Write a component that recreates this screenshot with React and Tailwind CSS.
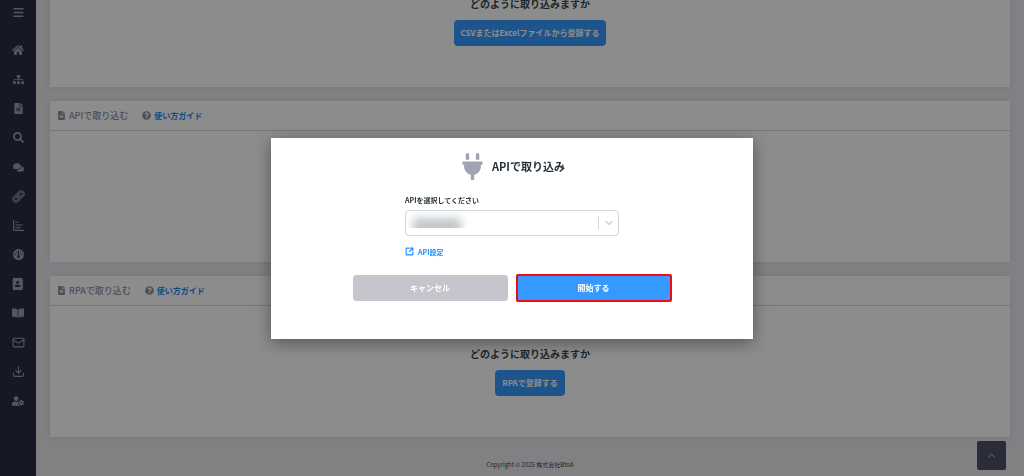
import {
  FaHome,
  FaSitemap,
  FaFileAlt,
  FaSearch,
  FaComments,
  FaAddressBook,
  FaBookOpen,
  FaUserCog,
  FaQuestionCircle,
  FaPlug,
} from "react-icons/fa";
import { FaGauge } from "react-icons/fa6";
import {
  Menu,
  ChartBar,
  Mail,
  Download,
  ChevronUp,
  ChevronDown,
  SquareArrowOutUpRight,
} from "lucide-react";

// chain link drawn as an outline: a wide stroke with a thinner dark one on top
function LinkOutline({ size }) {
  const chain = (
    <>
      <path d="M10 13a5 5 0 0 0 7.54.54l3-3a5 5 0 0 0-7.07-7.07l-1.72 1.71" />
      <path d="M14 11a5 5 0 0 0-7.54-.54l-3 3a5 5 0 0 0 7.07 7.07l1.71-1.71" />
    </>
  );
  return (
    <svg width={size} height={size} viewBox="-1 -1 26 26" fill="none" strokeLinecap="round">
      <g stroke="currentColor" strokeWidth="4.5">
        {chain}
      </g>
      <g stroke="#282d45" strokeWidth="1.5">
        {chain}
      </g>
    </svg>
  );
}

const navItems = [
  { id: "home", icon: FaHome, size: 12 },
  { id: "org", icon: FaSitemap, size: 11 },
  { id: "file", icon: FaFileAlt, size: 11 },
  { id: "search", icon: FaSearch, size: 11 },
  { id: "chat", icon: FaComments, size: 11 },
  { id: "link", icon: LinkOutline, size: 13 },
  { id: "chart", icon: ChartBar, size: 13 },
  { id: "dashboard", icon: FaGauge, size: 11 },
  { id: "contacts", icon: FaAddressBook, size: 12 },
  { id: "book", icon: FaBookOpen, size: 12 },
  { id: "mail", icon: Mail, size: 13 },
  { id: "download", icon: Download, size: 13 },
  { id: "users", icon: FaUserCog, size: 12 },
];

function Sidebar() {
  return (
    <aside className="flex w-9 shrink-0 flex-col items-center bg-[#282d45] pt-1.5 text-[#9a9eb4]">
      <button aria-label="menu" className="-ml-1">
        <Menu size={13} strokeWidth={3} className="ml-1" />
      </button>
      <nav className="mt-6 flex h-[365px] flex-col items-center justify-between">
        {navItems.map(({ id, icon: Icon, size }) => (
          <a key={id} href={`#${id}`} aria-label={id} className="flex h-3.5 items-center">
            <Icon size={size} />
          </a>
        ))}
      </nav>
    </aside>
  );
}

function Card({ title, children }) {
  return (
    <section className="shrink-0 bg-white shadow-[0_0_8px_rgba(82,63,105,0.12)]">
      {title && (
        <header className="flex h-[30px] items-center border-b border-gray-300 px-[7px] text-[9px] font-medium text-[#8c8ea3]">
          <FaFileAlt size={9} />
          <h2 className="ml-[3px] font-medium">{title}</h2>
          <FaQuestionCircle size={9} className="ml-3.5" />
          <a href="#guide" className="ml-[3px] text-[8px] font-bold text-[#1a84f5]">
            使い方ガイド
          </a>
        </header>
      )}
      <div className="flex min-h-[131px] flex-col items-center pt-[42px]">{children}</div>
    </section>
  );
}

function Question({ action }) {
  return (
    <>
      <p className="text-[10px] leading-3 font-bold text-[#37474f]">どのように取り込みますか</p>
      <button className="mt-2.5 h-[26px] rounded-sm bg-[#3699ff] px-[7px] text-[8px] font-bold text-white">
        {action}
      </button>
    </>
  );
}

function ApiModal() {
  return (
    <div className="fixed inset-0 z-50 flex items-center justify-center bg-black/45">
      <div
        role="dialog"
        aria-labelledby="modal-title"
        className="flex w-[482px] max-w-full flex-col items-center bg-white pt-[15px] pb-[37px] shadow-[0_4px_16px_rgba(0,0,0,0.4)]"
      >
        <div className="flex items-center gap-1.5">
          <FaPlug size={27} className="text-[#a1a2b4]" />
          <h1 id="modal-title" className="text-[11px] font-bold text-[#263238]">
            APIで取り込み
          </h1>
        </div>

        <div className="mt-3.5 flex w-[214px] flex-col">
          <label htmlFor="api" className="text-[7px] leading-3 font-bold text-[#263238]">
            APIを選択してください
          </label>
          <div className="relative mt-1">
            <select
              id="api"
              className="block h-[26px] w-full appearance-none rounded-sm border border-gray-300 bg-white px-2"
            >
              <option></option>
            </select>
            <span className="pointer-events-none absolute top-0.5 left-0.5 h-4 w-16 overflow-hidden">
              <span className="mt-1.5 ml-1.5 block h-5 w-12 bg-[#c2c7c9] blur-xs"></span>
            </span>
            <span className="pointer-events-none absolute inset-y-1.5 right-0 flex items-center border-l border-gray-300 px-1 text-gray-300">
              <ChevronDown size={12} strokeWidth={3} />
            </span>
          </div>
          <a
            href="#settings"
            className="mt-2 flex items-center gap-1 self-start text-[7px] leading-4 font-bold text-[#1a8cff]"
          >
            <SquareArrowOutUpRight size={9} strokeWidth={3} />
            API設定
          </a>
        </div>

        <div className="mt-3.5 flex items-center gap-2 text-[8px] font-bold text-white">
          <button className="h-[26px] w-[155px] rounded-sm bg-[#c5c5ce]">キャンセル</button>
          <button className="h-7 w-[156px] rounded-xs border-2 border-[#f00a14] bg-[#3699ff]">
            開始する
          </button>
        </div>
      </div>
    </div>
  );
}

function App() {
  return (
    <div className="flex h-screen overflow-hidden bg-[#ebecf1] font-['Noto_Sans_CJK_JP',sans-serif]">
      <Sidebar />
      <main className="flex grow flex-col justify-end gap-3.5 px-3.5">
        <Card>
          <Question action="CSVまたはExcelファイルから登録する" />
        </Card>
        <Card title="APIで取り込む" />
        <Card title="RPAで取り込む">
          <Question action="RPAで登録する" />
        </Card>
        <footer className="mt-1.5 pb-1 text-center text-[6px] leading-[15px] text-[#37474f]">
          Copyright © 2025 株式会社BtoA
        </footer>
      </main>
      <button
        aria-label="top"
        className="fixed right-[18px] bottom-1.5 flex size-[29px] items-center justify-center rounded-xs bg-[#4b5069] text-[#9a9eb4]"
      >
        <ChevronUp size={11} strokeWidth={3} />
      </button>
      <ApiModal />
    </div>
  );
}

export default App;
